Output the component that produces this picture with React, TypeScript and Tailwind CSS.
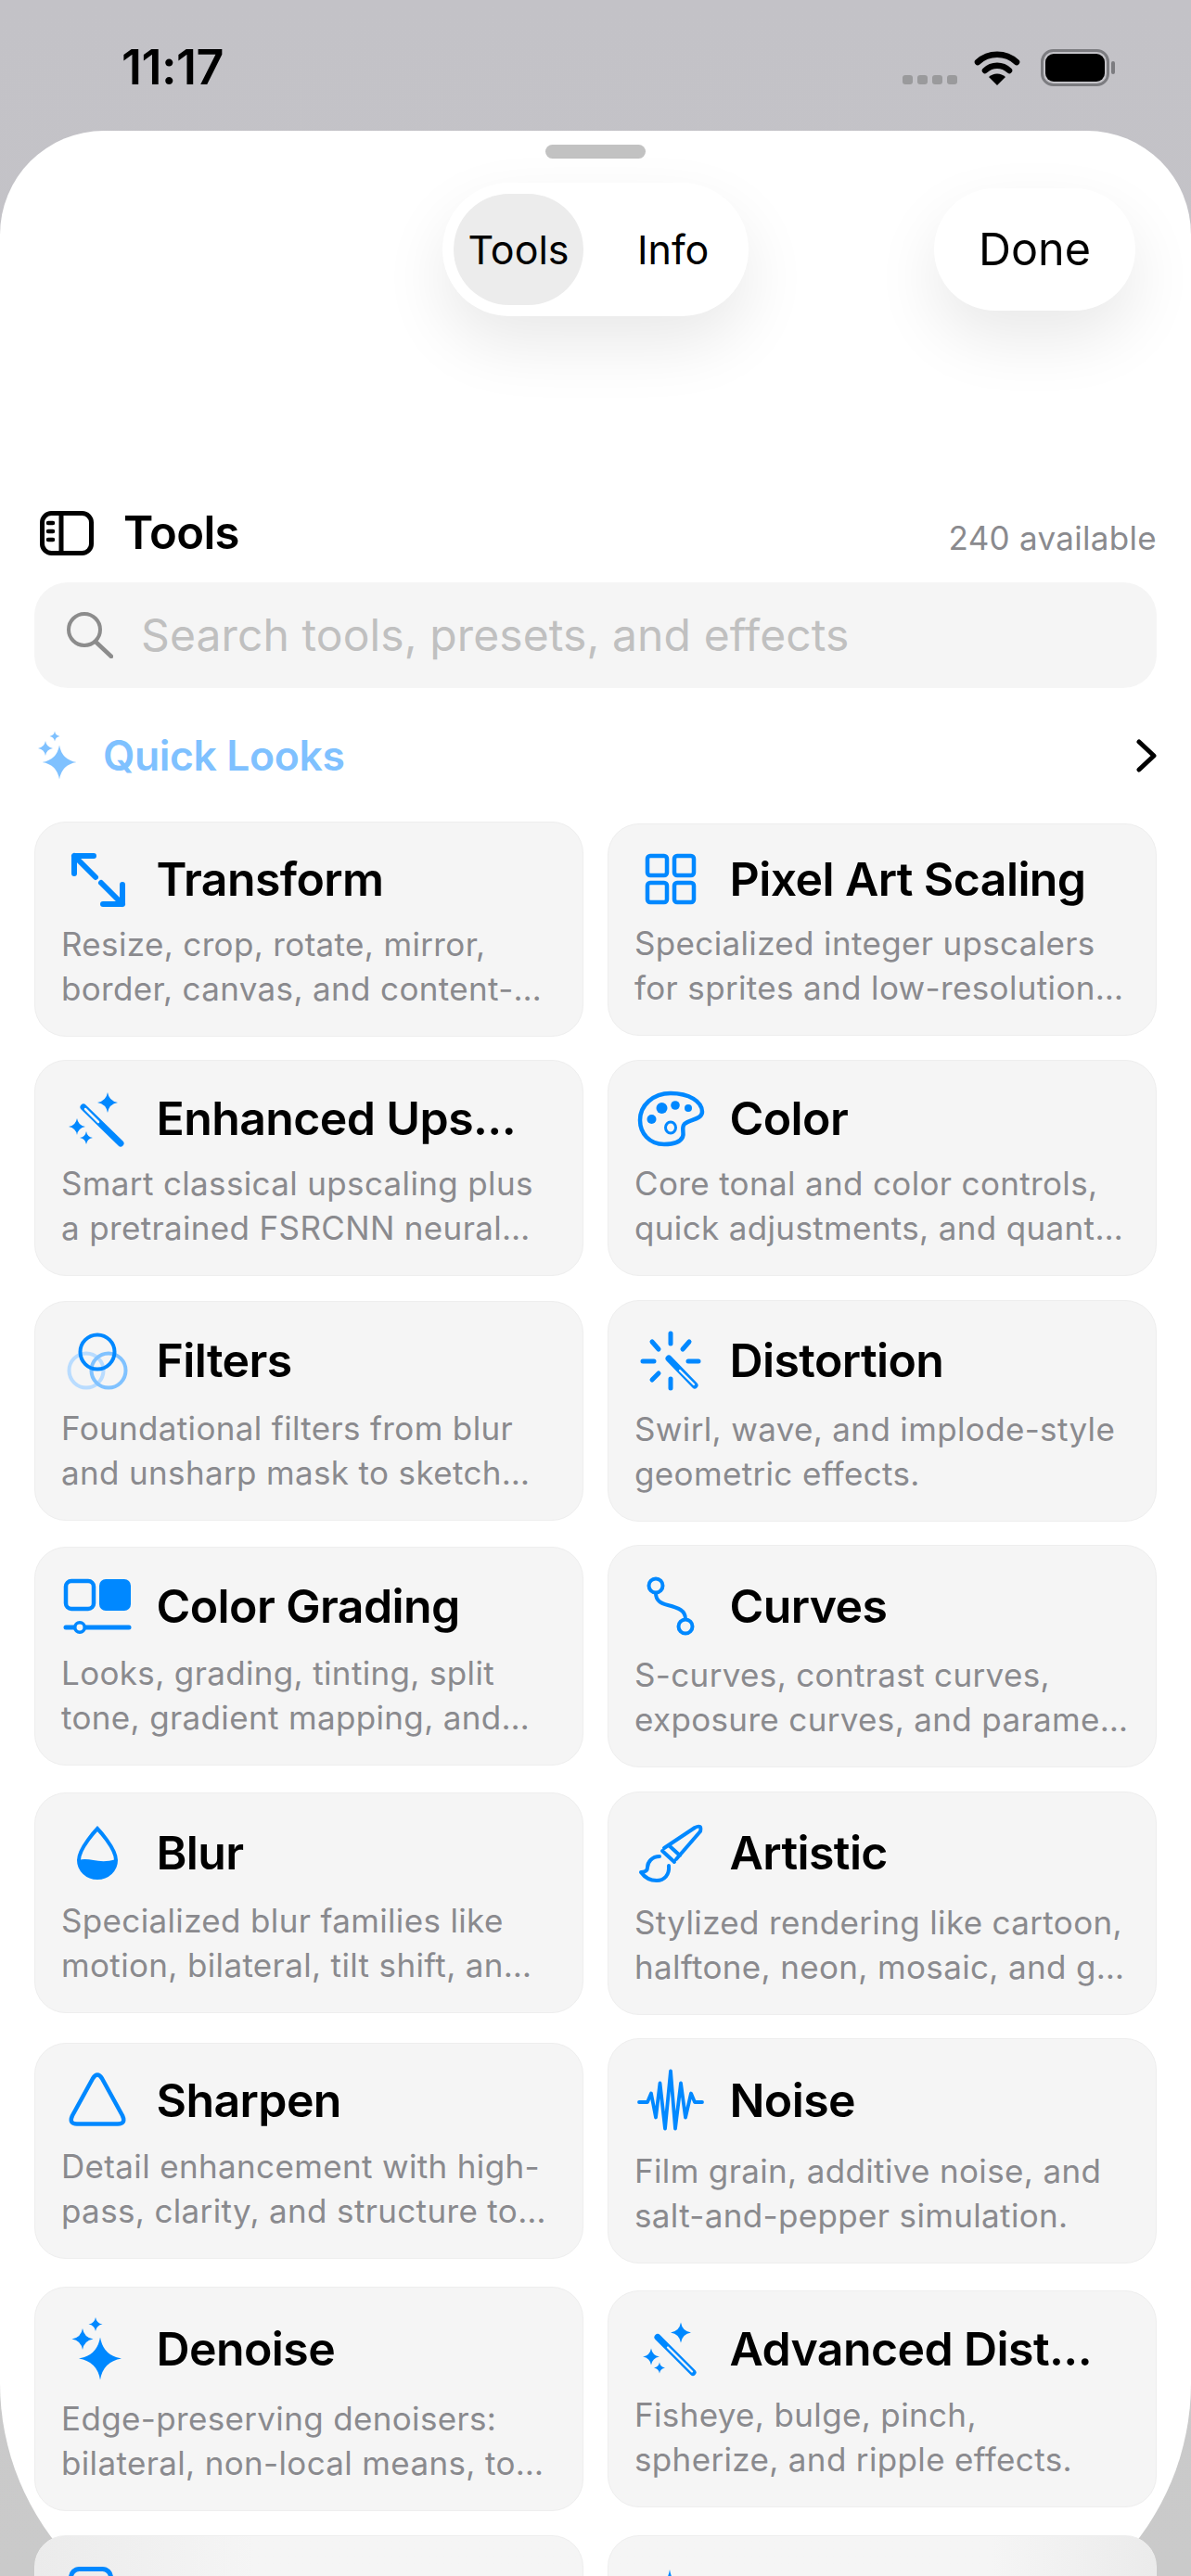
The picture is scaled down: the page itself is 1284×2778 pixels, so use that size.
import React from "react";

const BLUE = "#0088ff";
const CARD = "#f5f5f5";

function sparkle(cx: number, cy: number, r: number) {
  const k = r * 0.14;
  return `M${cx} ${cy - r}Q${cx + k} ${cy - k} ${cx + r} ${cy}Q${cx + k} ${cy + k} ${cx} ${cy + r}Q${cx - k} ${cy + k} ${cx - r} ${cy}Q${cx - k} ${cy - k} ${cx} ${cy - r}Z`;
}

function Frame({ x, c, children }: { x: number; c: number; children: React.ReactNode }) {
  return (
    <svg width={76} height={76} viewBox={`${x} ${c - 38} 76 76`} className="shrink-0 overflow-visible" fill="none" stroke="none">
      {children}
    </svg>
  );
}

const L = 67;
const R = 685;

const icons = {
  transform: (
    <Frame x={L} c={947}>
      <path d="M80 941V922H101M80 922L103 945M109 951L132 974M132 953V974H111" stroke={BLUE} strokeWidth={6} strokeLinecap="round" strokeLinejoin="round" />
    </Frame>
  ),
  pixel: (
    <Frame x={R} c={947}>
      <g stroke={BLUE} strokeWidth={4.5}>
        <rect x={698} y={922} width={21} height={21} rx={3} />
        <rect x={727} y={922} width={21} height={21} rx={3} />
        <rect x={698} y={951} width={21} height={21} rx={3} />
        <rect x={727} y={951} width={21} height={21} rx={3} />
      </g>
    </Frame>
  ),
  wand: (
    <Frame x={L} c={1205}>
      <path d={sparkle(116, 1188, 11)} fill={BLUE} />
      <path d={sparkle(83, 1214, 9)} fill={BLUE} />
      <path d={sparkle(93, 1226, 7)} fill={BLUE} />
      <path d="M90 1193L130 1232" stroke={BLUE} strokeWidth={7} strokeLinecap="round" />
      <path d="M92 1195L106 1209" stroke={CARD} strokeWidth={2.5} strokeLinecap="round" />
    </Frame>
  ),
  palette: (
    <Frame x={R} c={1205}>
      <path d="M723 1178C743 1178 757 1187 757 1198C757 1206 744 1206 738 1211C734 1215 738 1220 736 1225C733 1232 724 1233 716 1233C700 1233 690 1221 690 1207C690 1191 704 1178 723 1178Z" stroke={BLUE} strokeWidth={4.5} />
      <circle cx={713.5} cy={1194} r={6} fill={BLUE} />
      <circle cx={728} cy={1191} r={4.8} fill={BLUE} />
      <circle cx={742} cy={1194} r={4} fill={BLUE} />
      <circle cx={702.5} cy={1206} r={5} fill={BLUE} />
      <ellipse cx={723} cy={1215} rx={5.5} ry={6} stroke={BLUE} strokeWidth={3} />
    </Frame>
  ),
  filters: (
    <Frame x={L} c={1467}>
      <circle cx={93} cy={1478} r={18.5} stroke="#b9dcff" strokeWidth={4} />
      <circle cx={117} cy={1478} r={18.5} stroke="#80c2ff" strokeWidth={4} />
      <circle cx={105} cy={1458} r={18.5} stroke={BLUE} strokeWidth={4} />
    </Frame>
  ),
  distortion: (
    <Frame x={R} c={1467}>
      <path d="M723 1438V1449M693 1468H705M742 1468H753M723 1487V1497M703 1447L710 1455M736 1455L743 1447M703 1488L710 1481" stroke={BLUE} strokeWidth={5} strokeLinecap="round" />
      <path d="M721 1465L749 1494" stroke={BLUE} strokeWidth={7} strokeLinecap="round" />
      <path d="M733 1478L748 1493" stroke={CARD} strokeWidth={2.2} strokeLinecap="round" />
    </Frame>
  ),
  grading: (
    <Frame x={L} c={1732}>
      <rect x={71} y={1705} width={30} height={30} rx={6} stroke={BLUE} strokeWidth={4.5} />
      <rect x={107} y={1703} width={34} height={34} rx={7} fill={BLUE} />
      <path d="M71 1755H139" stroke={BLUE} strokeWidth={5} strokeLinecap="round" />
      <circle cx={86} cy={1755} r={5.2} fill={CARD} stroke={BLUE} strokeWidth={3.5} />
    </Frame>
  ),
  curves: (
    <Frame x={R} c={1732}>
      <circle cx={707} cy={1710} r={7.5} stroke={BLUE} strokeWidth={4} />
      <circle cx={739} cy={1754} r={7.5} stroke={BLUE} strokeWidth={4} />
      <path d="M707 1718C707 1726 712 1729 720 1731C732 1734 739 1737 739 1746" stroke={BLUE} strokeWidth={4} strokeLinecap="round" />
    </Frame>
  ),
  blur: (
    <Frame x={L} c={1998}>
      <path d="M105 1972C105 1972 125 1993 125 2006A20 19 0 0 1 85 2006C85 1993 105 1972 105 1972Z" stroke={BLUE} strokeWidth={4} />
      <path d="M85 2006C96 2002 106 2011 125 2005C126 2017 116 2025 105 2025C94 2025 84 2017 85 2006Z" fill={BLUE} />
    </Frame>
  ),
  brush: (
    <Frame x={R} c={1998}>
      <path d="M716 1993L749 1971Q757 1967 755 1975L729 2005M714 1996L727 2008M721 1990L733 2001" stroke={BLUE} strokeWidth={4} strokeLinecap="round" strokeLinejoin="round" />
      <path d="M711 2002C703 2002 698 2008 698 2014C698 2018 695 2019 691 2019C696 2026 702 2028 708 2028C716 2028 722 2022 721 2012" stroke={BLUE} strokeWidth={4} strokeLinecap="round" strokeLinejoin="round" />
    </Frame>
  ),
  sharpen: (
    <Frame x={L} c={2265.5}>
      <path d="M100 2242Q105 2234 110 2242L132 2282Q136 2291 127 2291H83Q74 2291 78 2282Z" stroke={BLUE} strokeWidth={4.5} strokeLinejoin="round" />
    </Frame>
  ),
  noise: (
    <Frame x={R} c={2265.5}>
      <path d="M689 2267.5H698L702 2258L707 2284L711.5 2247L717 2296L723 2234L728 2296L734 2247L739 2284L745 2258L749 2267.5H757" stroke={BLUE} strokeWidth={3.8} strokeLinecap="round" strokeLinejoin="round" />
    </Frame>
  ),
  denoise: (
    <Frame x={L} c={2533.5}>
      <path d={sparkle(108, 2544, 23)} fill={BLUE} />
      <path d={sparkle(89, 2523, 11.5)} fill={BLUE} />
      <path d={sparkle(103, 2507, 7.5)} fill={BLUE} />
    </Frame>
  ),
  advanced: (
    <Frame x={R} c={2533.5}>
      <path d={sparkle(734, 2516, 11)} fill={BLUE} />
      <path d={sparkle(702, 2542, 9)} fill={BLUE} />
      <path d={sparkle(711, 2554, 6)} fill={BLUE} />
      <path d="M709 2521L747 2559" stroke={BLUE} strokeWidth={7} strokeLinecap="round" />
      <path d="M720 2532L746 2558" stroke={CARD} strokeWidth={2.2} strokeLinecap="round" />
    </Frame>
  ),
  last1: (
    <Frame x={L} c={2801}>
      <rect x={76.5} y={2771.5} width={43} height={50} rx={9} stroke={BLUE} strokeWidth={5} />
    </Frame>
  ),
  last2: (
    <Frame x={R} c={2801}>
      <path d={sparkle(722, 2796, 24)} fill={BLUE} />
    </Frame>
  ),
};

type Item = { title?: string; a?: string; b?: string; h: string; icon: React.ReactNode; bg?: string };

const items: Item[] = [
  { title: "Transform", a: "Resize, crop, rotate, mirror,", b: "border, canvas, and content-…", h: "h-[72px]", icon: icons.transform },
  { title: "Pixel Art Scaling", a: "Specialized integer upscalers", b: "for sprites and low-resolution…", h: "h-[69px]", icon: icons.pixel },
  { title: "Enhanced Ups...", a: "Smart classical upscaling plus", b: "a pretrained FSRCNN neural…", h: "h-[73px]", icon: icons.wand },
  { title: "Color", a: "Core tonal and color controls,", b: "quick adjustments, and quant…", h: "h-[73px]", icon: icons.palette },
  { title: "Filters", a: "Foundational filters from blur", b: "and unsharp mask to sketch…", h: "h-[77px]", icon: icons.filters },
  { title: "Distortion", a: "Swirl, wave, and implode-style", b: "geometric effects.", h: "h-[79px]", icon: icons.distortion },
  { title: "Color Grading", a: "Looks, grading, tinting, split", b: "tone, gradient mapping, and…", h: "h-[76px]", icon: icons.grading },
  { title: "Curves", a: "S-curves, contrast curves,", b: "exposure curves, and parame…", h: "h-[80px]", icon: icons.curves },
  { title: "Blur", a: "Specialized blur families like", b: "motion, bilateral, tilt shift, an…", h: "h-[78px]", icon: icons.blur },
  { title: "Artistic", a: "Stylized rendering like cartoon,", b: "halftone, neon, mosaic, and g…", h: "h-[81px]", icon: icons.brush },
  { title: "Sharpen", a: "Detail enhancement with high-", b: "pass, clarity, and structure to…", h: "h-[73px]", icon: icons.sharpen },
  { title: "Noise", a: "Film grain, additive noise, and", b: "salt-and-pepper simulation.", h: "h-[83px]", icon: icons.noise },
  { title: "Denoise", a: "Edge-preserving denoisers:", b: "bilateral, non-local means, to…", h: "h-[82px]", icon: icons.denoise },
  { title: "Advanced Dist...", a: "Fisheye, bulge, pinch,", b: "spherize, and ripple effects.", h: "h-[74px]", icon: icons.advanced },
  { h: "h-[80px]", icon: icons.last1, bg: "bg-linear-to-r from-[#ebebeb] to-[#f5f5f5] to-40%" },
  { h: "h-[80px]", icon: icons.last2, bg: "bg-linear-to-l from-[#ebebeb] to-[#f5f5f5] to-30%" },
];

function Card({ item }: { item: Item }) {
  return (
    <div className={`rounded-[34px] border border-[#eeeeee] px-[29px] pt-[25px] pb-[27px] ${item.bg ?? "bg-[#f5f5f5]"}`}>
      <div className={`flex items-center gap-[25.5px] ${item.h}`}>
        {item.icon}
        <span className="text-[50px] font-semibold leading-none tracking-[-0.6px] whitespace-nowrap text-black">{item.title}</span>
      </div>
      <div className="mt-[10px] -ml-[1px] h-[96px] text-[35px] leading-[48px] tracking-[0.35px] whitespace-nowrap text-[#8a8a8e]">
        <div>{item.a}</div>
        <div>{item.b}</div>
      </div>
    </div>
  );
}

export default function App() {
  return (
    <div className="h-[2778px] w-[1284px] overflow-hidden bg-linear-to-b from-[#c3c2c7] to-[#cacaca] font-[Inter,sans-serif] text-black">
      <div className="flex h-[141px] items-start justify-between pt-[44px] pl-[131px] pr-[80px]">
        <span className="text-[52px] font-semibold leading-[58px] tracking-[-0.5px]">11:17</span>
        <svg width={232} height={44} viewBox="972 50 232 44" fill="none" className="mt-[6px]">
          <g fill="#9a9a9c">
            <rect x={973} y={81} width={11} height={10} rx={3} />
            <rect x={989} y={81} width={11} height={10} rx={3} />
            <rect x={1005} y={81} width={11} height={10} rx={3} />
            <rect x={1021} y={81} width={11} height={10} rx={3} />
          </g>
          <path d="M1054 67A31 31 0 0 1 1096 67M1062 76A19 19 0 0 1 1088 76" stroke="#000" strokeWidth={6.5} strokeLinecap="round" />
          <path d="M1075 92L1066 83A13 13 0 0 1 1084 83Z" fill="#000" />
          <rect x={1123.5} y={54.5} width={71} height={37} rx={12} stroke="#7c7c80" strokeWidth={3} />
          <rect x={1127} y={58} width={64} height={30} rx={9} fill="#000" />
          <rect x={1198} y={66} width={4} height={14} rx={2} fill="#7c7c80" />
        </svg>
      </div>

      <div className="h-[2706px] rounded-t-[112px] rounded-b-[277px] bg-white">
        <div className="mx-auto h-[15px] w-[108px] translate-y-[15px] rounded-full bg-[#c2c2c2]" />
        <div className="mt-[41px] grid h-[144px] grid-cols-[1fr_auto_1fr] items-center pr-[60px] pl-[60px]">
          <div />
          <div className="relative flex h-[144px] w-[330px] items-center rounded-full bg-white pl-[12px] text-[43px] shadow-[0_30px_70px_rgba(0,0,0,0.09)]">
            <span className="flex h-[120px] w-[140px] items-center justify-center rounded-full bg-[#ececec]">Tools</span>
            <span className="ml-[58px]">Info</span>
          </div>
          <div className="flex justify-end">
            <div className="flex h-[132px] w-[217px] items-center justify-center rounded-full bg-white text-[48.5px] shadow-[0_30px_70px_rgba(0,0,0,0.09)]">
              Done
            </div>
          </div>
        </div>

        <div className="mt-[210px] flex h-[48px] items-center justify-between pr-[37px] pl-[43px]">
          <div className="flex items-center gap-[32px]">
            <svg width={58} height={48} viewBox="0 0 58 48" fill="none" stroke="#000" strokeWidth={5}>
              <rect x={2.5} y={2.5} width={53} height={43} rx={10} />
              <path d="M23 3V45" />
              <path d="M9 13H14M9 22H14M9 31H14" strokeWidth={4.5} strokeLinecap="round" />
            </svg>
            <span className="-mt-[2px] text-[49px] font-semibold leading-none tracking-[-0.6px]">Tools</span>
          </div>
          <span className="mt-[10px] text-[35px] tracking-[0.3px] text-[#8a8a8e]">240 available</span>
        </div>

        <div className="mx-[37px] mt-[29px] flex h-[114px] items-center rounded-[36px] bg-[#f5f5f5] pl-[35px]">
          <svg width={50} height={50} viewBox="0 0 50 50" fill="none" stroke="#8c8c8c" strokeWidth={4}>
            <circle cx={19} cy={19} r={17} />
            <path d="M31 32L48 48" strokeWidth={4.5} strokeLinecap="round" />
          </svg>
          <span className="ml-[30px] text-[48px] tracking-[0.1px] text-[#c0c0c0]">Search tools, presets, and effects</span>
        </div>

        <div className="mt-[48px] flex h-[50px] items-center justify-between pr-[37px] pl-[40px]">
          <div className="flex items-center gap-[27px]">
            <svg width={44} height={52} viewBox="40 788 44 52" className="overflow-visible">
              <path d={sparkle(64, 821, 18.5)} fill="#7fc1ff" />
              <path d={sparkle(49, 806, 8)} fill="#7fc1ff" />
              <path d={sparkle(59, 793, 5.5)} fill="#7fc1ff" />
            </svg>
            <span className="text-[44.5px] font-semibold leading-none tracking-[-0.4px] text-[#7fc1ff]">Quick Looks</span>
          </div>
          <svg width={22} height={36} viewBox="0 0 22 36" fill="none" stroke="#000" strokeWidth={5} strokeLinecap="round" strokeLinejoin="round">
            <path d="M3 3L19 18L3 33" />
          </svg>
        </div>

        <div className="mt-[46px] grid grid-cols-[592px_592px] items-center gap-x-[26px] gap-y-[25.4px] px-[37px]">
          {items.map((it, i) => (
            <Card key={i} item={it} />
          ))}
        </div>
      </div>
    </div>
  );
}
